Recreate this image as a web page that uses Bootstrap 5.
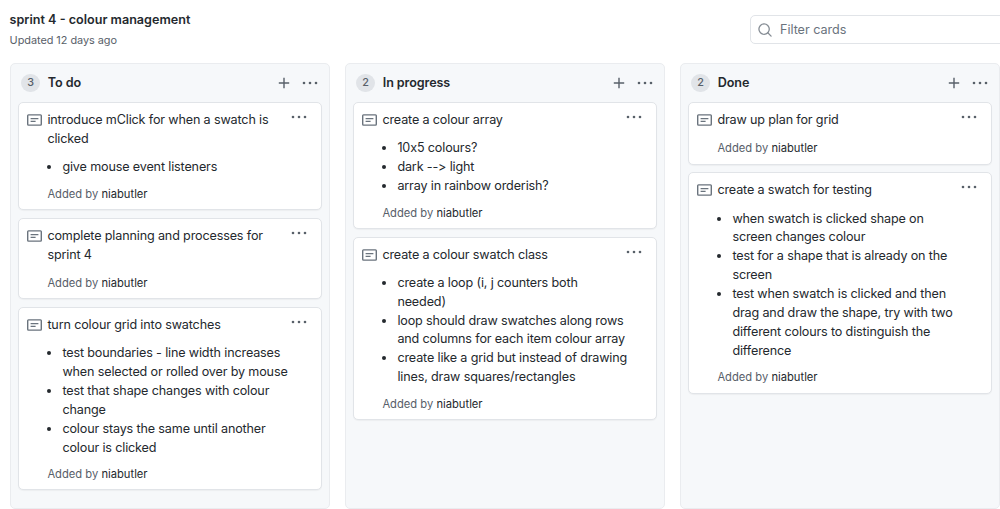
<!DOCTYPE html>
<html lang="en">
<head>
<meta charset="utf-8">
<meta name="viewport" content="width=device-width, initial-scale=1">
<title>sprint 4 - colour management</title>
<link href="https://cdn.jsdelivr.net/npm/bootstrap@5.3.0/dist/css/bootstrap.min.css" rel="stylesheet">
<style>
body { font-family: Inter, "Liberation Sans", sans-serif; font-size: 12.6px; line-height: 18.9px; letter-spacing: -.15px; color: #24292e; overflow: hidden; height: 509px; background: #fff; }
svg { display: block; flex: none; }
.board-head { height: 63px; padding: 10px 0 0 9.6px; }
.board-title { font-size: 12.6px; line-height: 19px; font-weight: 600; letter-spacing: 0; }
.updated { font-size: 10.9px; line-height: 16px; margin-top: 3px; color: #586069; letter-spacing: -.04px; }
.filter-box { width: 262px; height: 29px; margin: 5px -12px 0 0; border: 1px solid #e1e4e8; border-radius: 5px; color: #6a737d; padding-left: 7px; }
.filter-box input { font-size: 12.6px; letter-spacing: -.03px; margin-left: 8px; padding: 1px 0 0; color: #6a737d; }
.filter-box input::placeholder { color: #6a737d; }
.board { padding-left: 9.5px; gap: 15px; height: 445.5px; }
.board-col { width: 320px; flex: none; background: #f6f8fa; border: 1px solid #eaecef; border-radius: 5px; padding: 0 7px; }
.col-head { height: 38px; padding: 0 3.2px 1px 3.4px; }
.col-title { font-size: 12.6px; font-weight: 600; letter-spacing: -.1px; margin: 1px 0 0 7.5px; }
.counter { width: 19.4px; height: 18px; border-radius: 9px; background: #e1e4e8; color: #586069; font-size: 10.8px; line-height: 18px; font-weight: 500; letter-spacing: 0; text-align: center; }
.note { border: 1px solid #e1e4e8; border-radius: 5px; box-shadow: 0 1px 1px rgba(27,31,35,.04); margin-bottom: 7.6px; padding: 8px 14px 7.1px 8.6px; letter-spacing: inherit; color: inherit; }
.note-icon { margin-top: 3px; margin-right: 5.3px; }
.note-dots { margin-top: 3px; }
.note-body { white-space: nowrap; min-width: 0; }
.note-list { padding-left: 15px; margin: 9.3px 0 8.7px; }
.added { font-size: 11.2px; line-height: 16.2px; color: #586069; letter-spacing: 0; }
.note-title + .added { margin-top: 10.5px; }
.added span { color: #24292e; }
</style>
</head>
<body>
<svg width="0" height="0" class="position-absolute" aria-hidden="true">
  <symbol id="dots" viewBox="0 0 16 6"><g fill="#586069"><circle cx="2" cy="3" r="1.3"/><circle cx="8" cy="3" r="1.3"/><circle cx="14" cy="3" r="1.3"/></g></symbol>
  <symbol id="plus" viewBox="0 0 12 12"><path d="M6 .8v10.4M.8 6h10.4" stroke="#586069" stroke-width="1.4" fill="none"/></symbol>
  <symbol id="noteicon" viewBox="0 0 15 12"><rect x=".7" y=".9" width="13.6" height="10.2" rx=".8" fill="none" stroke="#6a737d" stroke-width="1.4"/><path d="M3.6 4.7h7.8M3.6 7.4h5" stroke="#6a737d" stroke-width="1.2"/></symbol>
</svg>
<header class="board-head d-flex justify-content-between align-items-start">
  <div>
    <h1 class="board-title mb-0">sprint 4 - colour management</h1>
    <div class="updated">Updated 12 days ago</div>
  </div>
  <div class="filter-box d-flex align-items-center">
    <svg width="14" height="14" viewBox="0 0 14 14" fill="none" stroke="#858c94" stroke-width="1.3"><circle cx="6.1" cy="6.1" r="5.2"/><path d="M9.8 9.8l3.3 3.3" stroke-linecap="round"/></svg>
    <input class="border-0 bg-transparent" type="text" placeholder="Filter cards" aria-label="Filter cards">
  </div>
</header>
<main class="board d-flex">
  <section class="board-col">
    <div class="col-head d-flex align-items-center">
      <span class="counter">3</span><h2 class="col-title mb-0">To do</h2>
      <svg class="ms-auto" width="12" height="12"><use href="#plus"/></svg>
      <svg class="ms-2 ps-1" width="20" height="6"><use href="#dots"/></svg>
    </div>
    <article class="card note"><div class="d-flex align-items-start">
      <svg class="note-icon" width="15" height="12"><use href="#noteicon"/></svg>
      <div class="note-body flex-grow-1">
        <div class="note-title">introduce mClick for when a swatch is<br>clicked</div>
        <ul class="note-list"><li>give mouse event listeners</li></ul>
        <div class="added">Added by <span>niabutler</span></div>
      </div>
      <svg class="note-dots" width="16" height="6"><use href="#dots"/></svg>
    </div></article>
    <article class="card note"><div class="d-flex align-items-start">
      <svg class="note-icon" width="15" height="12"><use href="#noteicon"/></svg>
      <div class="note-body flex-grow-1">
        <div class="note-title">complete planning and processes for<br>sprint 4</div>
        <div class="added">Added by <span>niabutler</span></div>
      </div>
      <svg class="note-dots" width="16" height="6"><use href="#dots"/></svg>
    </div></article>
    <article class="card note"><div class="d-flex align-items-start">
      <svg class="note-icon" width="15" height="12"><use href="#noteicon"/></svg>
      <div class="note-body flex-grow-1">
        <div class="note-title">turn colour grid into swatches</div>
        <ul class="note-list"><li>test boundaries - line width increases<br>when selected or rolled over by mouse</li><li>test that shape changes with colour<br>change</li><li>colour stays the same until another<br>colour is clicked</li></ul>
        <div class="added">Added by <span>niabutler</span></div>
      </div>
      <svg class="note-dots" width="16" height="6"><use href="#dots"/></svg>
    </div></article>
  </section>
  <section class="board-col">
    <div class="col-head d-flex align-items-center">
      <span class="counter">2</span><h2 class="col-title mb-0">In progress</h2>
      <svg class="ms-auto" width="12" height="12"><use href="#plus"/></svg>
      <svg class="ms-2 ps-1" width="20" height="6"><use href="#dots"/></svg>
    </div>
    <article class="card note"><div class="d-flex align-items-start">
      <svg class="note-icon" width="15" height="12"><use href="#noteicon"/></svg>
      <div class="note-body flex-grow-1">
        <div class="note-title">create a colour array</div>
        <ul class="note-list"><li>10x5 colours?</li><li>dark --&gt; light</li><li>array in rainbow orderish?</li></ul>
        <div class="added">Added by <span>niabutler</span></div>
      </div>
      <svg class="note-dots" width="16" height="6"><use href="#dots"/></svg>
    </div></article>
    <article class="card note"><div class="d-flex align-items-start">
      <svg class="note-icon" width="15" height="12"><use href="#noteicon"/></svg>
      <div class="note-body flex-grow-1">
        <div class="note-title">create a colour swatch class</div>
        <ul class="note-list"><li>create a loop (i, j counters both<br>needed)</li><li>loop should draw swatches along rows<br>and columns for each item colour array</li><li>create like a grid but instead of drawing<br>lines, draw squares/rectangles</li></ul>
        <div class="added">Added by <span>niabutler</span></div>
      </div>
      <svg class="note-dots" width="16" height="6"><use href="#dots"/></svg>
    </div></article>
  </section>
  <section class="board-col">
    <div class="col-head d-flex align-items-center">
      <span class="counter">2</span><h2 class="col-title mb-0">Done</h2>
      <svg class="ms-auto" width="12" height="12"><use href="#plus"/></svg>
      <svg class="ms-2 ps-1" width="20" height="6"><use href="#dots"/></svg>
    </div>
    <article class="card note"><div class="d-flex align-items-start">
      <svg class="note-icon" width="15" height="12"><use href="#noteicon"/></svg>
      <div class="note-body flex-grow-1">
        <div class="note-title">draw up plan for grid</div>
        <div class="added">Added by <span>niabutler</span></div>
      </div>
      <svg class="note-dots" width="16" height="6"><use href="#dots"/></svg>
    </div></article>
    <article class="card note"><div class="d-flex align-items-start">
      <svg class="note-icon" width="15" height="12"><use href="#noteicon"/></svg>
      <div class="note-body flex-grow-1">
        <div class="note-title">create a swatch for testing</div>
        <ul class="note-list"><li>when swatch is clicked shape on<br>screen changes colour</li><li>test for a shape that is already on the<br>screen</li><li>test when swatch is clicked and then<br>drag and draw the shape, try with two<br>different colours to distinguish the<br>difference</li></ul>
        <div class="added">Added by <span>niabutler</span></div>
      </div>
      <svg class="note-dots" width="16" height="6"><use href="#dots"/></svg>
    </div></article>
  </section>
</main>
<script src="https://cdn.jsdelivr.net/npm/bootstrap@5.3.0/dist/js/bootstrap.bundle.min.js"></script>
</body>
</html>
